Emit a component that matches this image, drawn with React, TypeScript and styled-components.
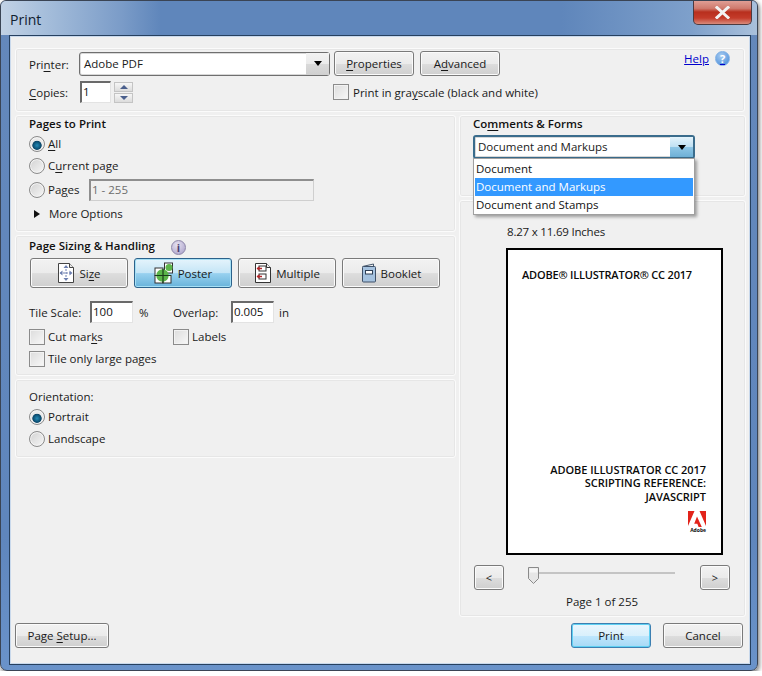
import * as React from 'react';
import styled, { createGlobalStyle } from 'styled-components';

const GlobalStyle = createGlobalStyle`
    html, body {
        margin: 0;
        padding: 0;
        background: #fff;
    }
    body {
        font-family: "Open Sans", "Noto Sans", sans-serif;
        font-size: 11.5px;
        color: #1a1a1a;
    }
    u {
        text-underline-offset: 2px;
    }
`;

const Frame = styled.div`
    box-sizing: border-box;
    width: 758px;
    height: 671px;
    padding: 0 6px 6px 8px;
    display: flex;
    flex-direction: column;
    border-radius: 6px 6px 7px 7px;
    border: 1px solid #3a4454;
    background: linear-gradient(180deg, #6488bb 0, #5f86bd 80%, #6a93ca 100%);
    box-shadow: 1px 2px 5px rgba(0, 0, 0, 0.6);
    overflow: hidden;
`;

const TitleBar = styled.div`
    height: 34px;
    margin: 0 -6px 0 -8px;
    padding-left: 9px;
    display: flex;
    justify-content: space-between;
    align-items: flex-start;
    background: linear-gradient(90deg, #c2d2e5 0, #a8c0dc 40px, #7b9cc8 120px, #5f86bb 160px, #5f86bb 560px, #7ea0cb 690px, #aac1dc 758px);
`;

const Title = styled.span`
    font-size: 14px;
    line-height: 38px;
    color: #10202f;
`;

const CloseButton = styled.div`
    width: 59px;
    height: 25px;
    margin: -1px 5px 0 0;
    display: flex;
    align-items: center;
    justify-content: center;
    box-sizing: border-box;
    border: 1px solid #4d3a3f;
    border-top: none;
    border-radius: 0 0 5px 5px;
    background: linear-gradient(180deg, #e2a39a 0, #cf7a6d 35%, #b82f1e 50%, #c43b2a 75%, #d98b7c 100%);
    svg {
        display: block;
    }
`;

const Dialog = styled.div`
    flex: 1;
    box-sizing: border-box;
    padding: 12px 5px 16px 5px;
    display: flex;
    flex-direction: column;
    background: #f0f0f0;
    border: 1px solid #26405f;
    outline: 1px solid #c9d9ec;
    outline-offset: -2px;
`;

const Panel = styled.section`
    box-sizing: border-box;
    background: #f0f0f0;
    border: 1px solid #fbfbfb;
    border-radius: 3px;
    box-shadow: 0 0 0 1px #e6e6e6 inset;
`;

const TopPanel = styled(Panel)`
    height: 64px;
    padding: 2px 14px 0 13px;
    display: flex;
    flex-direction: column;
    gap: 5px;
    position: relative;
`;

const Row = styled.div<{ $gap?: number; $top?: number; $left?: number }>`
    display: flex;
    align-items: center;
    gap: ${p => p.$gap ?? 0}px;
    margin-top: ${p => p.$top ?? 0}px;
    margin-left: ${p => p.$left ?? 0}px;
`;

const Columns = styled.div`
    margin-top: 3px;
    display: grid;
    grid-template-columns: 441px 287px;
    column-gap: 3px;
`;

const Stack = styled.div`
    display: flex;
    flex-direction: column;
    gap: 3px;
`;

const PagesPanel = styled(Panel)`
    height: 117px;
    padding: 0 13px;
`;

const SizingPanel = styled(Panel)`
    height: 141px;
    padding: 2px 13px 0;
`;

const OrientationPanel = styled(Panel)`
    height: 79px;
    padding: 9px 13px 0;
`;

const CommentsPanel = styled(Panel)`
    height: 82px;
    padding: 0 13px;
    position: relative;
`;

const PreviewPanel = styled(Panel)`
    height: 417px;
    padding: 23px 15px 0 14px;
    display: flex;
    flex-direction: column;
`;

const Heading = styled.div`
    font-weight: 600;
    line-height: 16px;
    padding-bottom: 2px;
    color: #111;
`;

const Label = styled.span<{ $width?: number; $left?: number }>`
    display: inline-block;
    line-height: 16px;
    white-space: nowrap;
    margin-left: ${p => p.$left ?? 0}px;
    ${p => (p.$width ? `width: ${p.$width}px;` : '')}
`;

// these sit one pixel under the middle of the field next to them
const FieldLabel = styled(Label)`
    padding-top: 2px;
`;

const ComboBox = styled.div`
    box-sizing: border-box;
    width: 251px;
    height: 24px;
    display: flex;
    align-items: stretch;
    border: 1px solid #6f6f6f;
    border-radius: 3px;
    background: #fff;
    box-shadow: 0 0 0 1px #d8d8d8 inset;
`;

const ComboText = styled.span`
    flex: 1;
    padding-left: 4px;
    line-height: 22px;
`;

const FocusText = styled(ComboText)`
    padding-left: 3px;
    line-height: 20px;
`;

const ComboArrow = styled.span<{ $active?: boolean }>`
    width: 23px;
    display: flex;
    align-items: center;
    justify-content: center;
    background: ${p =>
        p.$active
            ? 'linear-gradient(180deg, #e4f3fb 0, #bfe0f3 50%, #8ec6e6 52%, #6eb0d6 100%)'
            : 'linear-gradient(180deg, #f2f2f2 0, #ebebeb 50%, #dadada 52%, #cfcfcf 100%)'};
    &::after {
        content: '';
        border-left: 4px solid transparent;
        border-right: 4px solid transparent;
        border-top: 5px solid #000;
    }
`;

const FocusCombo = styled(ComboBox)`
    width: 222px;
    border: 2px solid #3a6c8c;
    margin-top: 1px;
`;

const Button = styled.button<{ $width: number; $default?: boolean }>`
    box-sizing: border-box;
    width: ${p => p.$width}px;
    height: 25px;
    padding: 0;
    font: inherit;
    color: #1a1a1a;
    border-radius: 3px;
    border: 1px solid ${p => (p.$default ? '#3c7fb1' : '#7a7a7a')};
    box-shadow: inset 0 0 0 1px ${p => (p.$default ? '#5fd0f2' : '#fbfbfb')};
    background: ${p =>
        p.$default
            ? 'linear-gradient(180deg, #eaf6fd 0, #d9f0fc 50%, #bee6fd 52%, #a7d9f5 100%)'
            : 'linear-gradient(180deg, #f2f2f2 0, #ebebeb 50%, #dddddd 52%, #cfcfcf 100%)'};
`;

const ToolGrid = styled.div`
    margin-top: 2px;
    margin-left: 1px;
    display: flex;
    gap: 6px;
`;

const ToolButton = styled.button<{ $active?: boolean }>`
    box-sizing: border-box;
    width: 98px;
    height: 30px;
    padding: 0;
    font: inherit;
    color: #1a1a1a;
    display: flex;
    align-items: center;
    justify-content: center;
    gap: 4px;
    border-radius: 3px;
    border: 1px solid ${p => (p.$active ? '#2c628b' : '#7a7a7a')};
    box-shadow: inset 0 0 0 1px ${p => (p.$active ? '#a6e0f5' : '#fbfbfb')};
    background: ${p =>
        p.$active
            ? 'linear-gradient(180deg, #e5f4fc 0, #c4e5f6 50%, #98d1ef 52%, #68b3db 100%)'
            : 'linear-gradient(180deg, #f2f2f2 0, #ebebeb 50%, #dddddd 52%, #cfcfcf 100%)'};
`;

const TextBox = styled.div<{ $width: number; $disabled?: boolean }>`
    box-sizing: border-box;
    width: ${p => p.$width}px;
    height: 22px;
    padding-left: 1px;
    line-height: 18px;
    border: 1px solid ${p => (p.$disabled ? '#cfcfcf' : '#e3e3e3')};
    border-top: 2px solid ${p => (p.$disabled ? '#8e8e8e' : '#6a6a6a')};
    border-left: 2px solid ${p => (p.$disabled ? '#8e8e8e' : '#6a6a6a')};
    background: ${p => (p.$disabled ? '#f0f0f0' : '#fff')};
    color: ${p => (p.$disabled ? '#6d6d6d' : '#111')};
`;

const Spinner = styled.div`
    margin-left: 3px;
    width: 19px;
    display: flex;
    flex-direction: column;
    gap: 1px;
`;

const SpinButton = styled.span<{ $down?: boolean }>`
    box-sizing: border-box;
    height: 10px;
    border: 1px solid #c4c4c4;
    background: linear-gradient(180deg, #f6f6f6, #dcdcdc);
    display: flex;
    align-items: center;
    justify-content: center;
    &::after {
        content: '';
        border-left: 4px solid transparent;
        border-right: 4px solid transparent;
        ${p => (p.$down ? 'border-top: 4px solid #4a5f8c;' : 'border-bottom: 4px solid #4a5f8c;')}
    }
`;

const Check = styled.span`
    box-sizing: border-box;
    flex: none;
    display: inline-block;
    width: 16px;
    height: 16px;
    margin-right: 3px;
    border: 1px solid #8b8b8b;
    background: linear-gradient(135deg, #dcdcdc, #f8f8f8);
    box-shadow: inset 0 0 0 1px #f2f2f2;
`;

const Radio = styled.span<{ $on?: boolean }>`
    box-sizing: border-box;
    flex: none;
    display: inline-block;
    width: 16px;
    height: 16px;
    margin-right: 3px;
    border-radius: 50%;
    border: 1px solid #8b8b8b;
    background: ${p =>
        p.$on
            ? 'radial-gradient(circle at 50% 60%, #2389b5 0, #0f5a80 3px, #0c4668 4.3px, #e8e8e8 5px, #f4f4f4 100%)'
            : 'linear-gradient(135deg, #d2d2d2, #f6f6f6)'};
    box-shadow: inset 0 0 0 1px #f4f4f4;
`;

const OptionRow = styled(Row)`
    height: 16px;
`;

const Disclosure = styled.span`
    display: inline-block;
    margin: 0 9px 0 5px;
    border-top: 4px solid transparent;
    border-bottom: 4px solid transparent;
    border-left: 6px solid #111;
`;

const HelpLink = styled.a`
    position: absolute;
    top: 2px;
    right: 14px;
    display: flex;
    align-items: center;
    gap: 6px;
    color: #0000cc;
    text-decoration: underline;
`;

const Bubble = styled.span<{ $purple?: boolean }>`
    box-sizing: border-box;
    width: 15px;
    height: 15px;
    border-radius: 50%;
    display: inline-flex;
    align-items: center;
    justify-content: center;
    font-size: 11px;
    font-weight: 700;
    line-height: 1;
    color: ${p => (p.$purple ? '#4b3f73' : '#fff')};
    background: ${p =>
        p.$purple
            ? 'radial-gradient(circle at 40% 30%, #e6e2f0, #a69cc8)'
            : 'radial-gradient(circle at 40% 30%, #a9cdf2, #3f86d6)'};
    border: 1px solid ${p => (p.$purple ? '#8d86a8' : '#7fb0e6')};
`;

const Menu = styled.div`
    position: absolute;
    left: 13px;
    top: 42px;
    width: 222px;
    box-sizing: border-box;
    padding: 1px 1px 0;
    background: #fff;
    border: 1px solid #a0a0a0;
    box-shadow: 2px 2px 3px rgba(0, 0, 0, 0.35);
    z-index: 2;
`;

const MenuItem = styled.div<{ $selected?: boolean }>`
    height: 18px;
    line-height: 18px;
    padding-left: 1px;
    color: ${p => (p.$selected ? '#fff' : '#111')};
    background: ${p => (p.$selected ? '#3399ff' : 'transparent')};
`;

const PageInfo = styled.div`
    padding-left: 33px;
    line-height: 16px;
    letter-spacing: -0.2px;
`;

const Sheet = styled.div`
    box-sizing: border-box;
    width: 217px;
    height: 307px;
    margin: 8px 0 0 32px;
    padding: 17px 15px 0 14px;
    display: flex;
    flex-direction: column;
    background: #fff;
    border: 2px solid #000;
    color: #0a0a0a;
    font-size: 11px;
    font-weight: 600;
`;

const SheetTitle = styled.div`
    line-height: 16px;
    letter-spacing: -0.2px;
    white-space: nowrap;
`;

const SheetFooter = styled.div`
    margin-top: auto;
    padding: 0 0 19px;
    text-align: right;
    line-height: 13.5px;
    letter-spacing: -0.05px;
`;

const LogoWrap = styled.div`
    margin-top: 8px;
    display: flex;
    flex-direction: column;
    align-items: flex-end;
    svg {
        display: block;
    }
`;

const LogoWord = styled.span`
    font-size: 5px;
    font-weight: 700;
    line-height: 7px;
    letter-spacing: 0;
`;

const NavRow = styled.div`
    margin-top: 10px;
    display: flex;
    align-items: flex-start;
`;

const NavButton = styled(Button)`
    flex: none;
    font-size: 11px;
`;

const Slider = styled.div`
    position: relative;
    flex: 1;
    height: 20px;
    margin: 0 25px 0 24px;
    &::before {
        content: '';
        position: absolute;
        left: 0;
        right: 0;
        top: 7px;
        height: 2px;
        background: #c4c4c4;
    }
`;

const Thumb = styled.span`
    position: absolute;
    left: 0;
    top: 2px;
    svg {
        display: block;
    }
`;

const PageCount = styled.div`
    margin-top: 4px;
    text-align: center;
    line-height: 16px;
`;

const Footer = styled.div`
    margin-top: 6px;
    padding-right: 2px;
    display: flex;
    gap: 12px;
`;

const Spacer = styled.div`
    flex: 1;
`;

const SizeIcon = () => (
    <svg width="18" height="22" viewBox="0 0 18 22">
        <path d="M1.5 1.5h11l4 4v15h-15z" fill="#fff" stroke="#444" />
        <path d="M12.5 1.5v4h4" fill="#e8e8e8" stroke="#444" />
        <path d="M9 4v14M3 11h12" stroke="#6c7fb0" strokeWidth="1" strokeDasharray="2 1" />
        <path d="M9 3l-2.5 3h5zM9 19l-2.5-3h5zM2.5 11l3-2.5v5zM15.5 11l-3-2.5v5z" fill="#6c7fb0" />
    </svg>
);

const PosterIcon = () => (
    <svg width="20" height="22" viewBox="0 0 20 22">
        <rect x="1" y="6" width="8" height="7.5" fill="#fff" stroke="#333" />
        <rect x="1" y="13.5" width="8" height="7.5" fill="#fff" stroke="#333" />
        <rect x="9" y="13.5" width="8" height="7.5" fill="#fff" stroke="#333" />
        <rect x="10.5" y="1" width="8" height="10" fill="#fff" stroke="#333" />
        <circle cx="8.5" cy="13.5" r="6.2" fill="#5cb54a" />
        <circle cx="15" cy="5.5" r="3.5" fill="#5cb54a" />
        <path d="M9 7v14M1 13.5h16" stroke="#1b3d1a" strokeWidth="1.2" />
    </svg>
);

const MultipleIcon = () => (
    <svg width="18" height="22" viewBox="0 0 18 22">
        <path d="M1.5 1.5h11l4 4v15h-15z" fill="#fff" stroke="#333" />
        <path d="M12.5 1.5v4h4" fill="#eee" stroke="#333" />
        <rect x="5" y="4" width="7" height="5" fill="#fff" stroke="#333" />
        <rect x="5" y="12" width="7" height="5" fill="#fff" stroke="#333" />
        <path d="M3 6.5h5M3 14.5h5" stroke="#b3262a" strokeWidth="1.3" />
        <path d="M2.5 6.5l3-2.2v4.4zM2.5 14.5l3-2.2v4.4z" fill="#b3262a" />
    </svg>
);

const BookletIcon = () => (
    <svg width="16" height="20" viewBox="0 0 16 20">
        <path d="M1.5 3.5l11-2.5v3" fill="none" stroke="#47596e" />
        <rect x="1.5" y="3.5" width="13" height="15.5" rx="1" fill="#a5c2df" stroke="#3e5068" />
        <rect x="4.5" y="7.5" width="7" height="3.5" fill="#fff" stroke="#2e3f55" />
    </svg>
);

const AdobeLogo = () => (
    <svg width="18" height="16" viewBox="0 0 18 16">
        <path d="M0 0h6.5L0 15zM11.5 0H18v15zM9 5.5L13.8 16h-3.2l-1.3-3.2H6.2z" fill="#e2231a" />
    </svg>
);

const SliderThumb = () => (
    <svg width="11" height="17" viewBox="0 0 11 17">
        <path d="M.5.5h10v11l-5 5-5-5z" fill="#e6e6e6" stroke="#8a8a8a" />
        <path d="M1.5 1.5h8v4h-8z" fill="#f6f6f6" />
    </svg>
);

const App = () => (
    <>
        <GlobalStyle />
        <Frame>
            <TitleBar>
                <Title>Print</Title>
                <CloseButton>
                    <svg width="15" height="13" viewBox="0 0 15 13">
                        <path d="M2 1.5l11 10M13 1.5l-11 10" stroke="#f2f2f2" strokeWidth="3" strokeLinecap="square" />
                    </svg>
                </CloseButton>
            </TitleBar>
            <Dialog>
                <TopPanel>
                    <Row>
                        <FieldLabel $width={50}>Pri<u>n</u>ter:</FieldLabel>
                        <ComboBox>
                            <ComboText>Adobe PDF</ComboText>
                            <ComboArrow />
                        </ComboBox>
                        <Row $gap={6} $left={4}>
                            <Button $width={80}><u>P</u>roperties</Button>
                            <Button $width={80}>A<u>d</u>vanced</Button>
                        </Row>
                    </Row>
                    <HelpLink>Help<Bubble>?</Bubble></HelpLink>
                    <Row>
                        <FieldLabel $width={51}><u>C</u>opies:</FieldLabel>
                        <TextBox $width={31}>1</TextBox>
                        <Spinner>
                            <SpinButton />
                            <SpinButton $down />
                        </Spinner>
                        <Row $left={200}>
                            <Check />
                            <FieldLabel $left={1}>Print in gra<u>y</u>scale (black and white)</FieldLabel>
                        </Row>
                    </Row>
                </TopPanel>
                <Columns>
                    <Stack>
                        <PagesPanel>
                            <Heading>Pages to Print</Heading>
                            <OptionRow $top={2}><Radio $on /><Label><u>A</u>ll</Label></OptionRow>
                            <OptionRow $top={6}><Radio /><Label>C<u>u</u>rrent page</Label></OptionRow>
                            <OptionRow $top={8}>
                                <Radio />
                                <Label $width={41}>Pa<u>g</u>es</Label>
                                <TextBox $width={225} $disabled>1 - 255</TextBox>
                            </OptionRow>
                            <OptionRow $top={8}><Disclosure /><Label>More Options</Label></OptionRow>
                        </PagesPanel>
                        <SizingPanel>
                            <Row $gap={16}>
                                <Heading>Page Sizing &amp; Handling</Heading>
                                <Bubble $purple>i</Bubble>
                            </Row>
                            <ToolGrid>
                                <ToolButton><SizeIcon /><span>Si<u>z</u>e</span></ToolButton>
                                <ToolButton $active><PosterIcon />Poster</ToolButton>
                                <ToolButton><MultipleIcon />Multiple</ToolButton>
                                <ToolButton><BookletIcon />Booklet</ToolButton>
                            </ToolGrid>
                            <Row $top={13}>
                                <FieldLabel $width={61}>Tile Scale:</FieldLabel>
                                <TextBox $width={43}>100</TextBox>
                                <FieldLabel $width={34} $left={6}>%</FieldLabel>
                                <FieldLabel $width={58}>Overlap:</FieldLabel>
                                <TextBox $width={43}>0.005</TextBox>
                                <FieldLabel $left={5}>in</FieldLabel>
                            </Row>
                            <OptionRow $top={6}>
                                <Check />
                                <Label $width={125}>Cut mar<u>k</u>s</Label>
                                <Check />
                                <Label>Labels</Label>
                            </OptionRow>
                            <OptionRow $top={6}>
                                <Check />
                                <Label>Tile only large pages</Label>
                            </OptionRow>
                        </SizingPanel>
                        <OrientationPanel>
                            <Label>Orientation:</Label>
                            <OptionRow $top={4}><Radio $on /><Label>Portrait</Label></OptionRow>
                            <OptionRow $top={6}><Radio /><Label>Landscape</Label></OptionRow>
                        </OrientationPanel>
                    </Stack>
                    <Stack>
                        <CommentsPanel>
                            <Heading>Co<u>m</u>ments &amp; Forms</Heading>
                            <FocusCombo>
                                <FocusText>Document and Markups</FocusText>
                                <ComboArrow $active />
                            </FocusCombo>
                            <Menu>
                                <MenuItem>Document</MenuItem>
                                <MenuItem $selected>Document and Markups</MenuItem>
                                <MenuItem>Document and Stamps</MenuItem>
                            </Menu>
                        </CommentsPanel>
                        <PreviewPanel>
                            <PageInfo>8.27 x 11.69 Inches</PageInfo>
                            <Sheet>
                                <SheetTitle>ADOBE® ILLUSTRATOR® CC 2017</SheetTitle>
                                <SheetFooter>
                                    ADOBE ILLUSTRATOR CC 2017<br />
                                    SCRIPTING REFERENCE:<br />
                                    JAVASCRIPT
                                    <LogoWrap>
                                        <AdobeLogo />
                                        <LogoWord>Adobe</LogoWord>
                                    </LogoWrap>
                                </SheetFooter>
                            </Sheet>
                            <NavRow>
                                <NavButton $width={30}>&lt;</NavButton>
                                <Slider>
                                    <Thumb><SliderThumb /></Thumb>
                                </Slider>
                                <NavButton $width={30}>&gt;</NavButton>
                            </NavRow>
                            <PageCount>Page 1 of 255</PageCount>
                        </PreviewPanel>
                    </Stack>
                </Columns>
                <Spacer />
                <Footer>
                    <Button $width={94}>Page <u>S</u>etup...</Button>
                    <Spacer />
                    <Button $width={80} $default>Print</Button>
                    <Button $width={80}>Cancel</Button>
                </Footer>
            </Dialog>
        </Frame>
    </>
);

export default App;
